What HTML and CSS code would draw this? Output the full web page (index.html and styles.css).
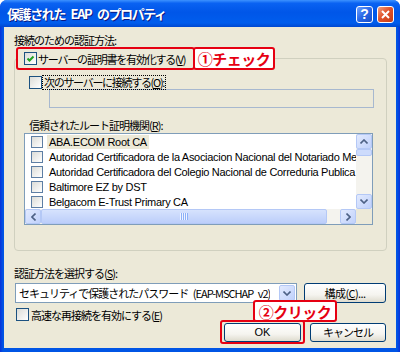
FILE: index.html
```html
<!DOCTYPE html>
<html lang="ja">
<head>
    <meta charset="UTF-8">
    <title>保護された EAP のプロパティ</title>
    <link rel="stylesheet" href="styles.css">
</head>
<body>
<div class="window">
    <div class="titlebar">
        <span class="title">保護された EAP のプロパティ</span>
        <div class="title-btns">
            <span class="tbtn help">?</span>
            <span class="tbtn close">
                <svg width="9" height="9" viewBox="0 0 9 9"><path d="M1 1 L8 8 M8 1 L1 8" stroke="#fff" stroke-width="2"/></svg>
            </span>
        </div>
    </div>

    <div class="dialog">
        <div class="label">接続のための認証方法:</div>

        <div class="group">
            <div class="group-head">
                <div class="mark">
                    <span class="cb"><svg width="9" height="9" viewBox="0 0 9 9"><polyline points="1.5,4.5 3.5,6.5 7.5,2.5" fill="none" stroke="#21a121" stroke-width="2"/></svg></span>
                    <span>サーバーの証明書を有効化する(<u>V</u>)</span>
                </div>
                <div class="callout">①チェック</div>
            </div>

            <div class="row server-row">
                <span class="cb"></span>
                <span class="focus">次のサーバーに接続する(<u>O</u>):</span>
            </div>
            <div class="textbox"></div>

            <div class="label sub-label">信頼されたルート証明機関(<u>R</u>):</div>
            <div class="listbox">
                <div class="list-main">
                    <div class="list-rows">
                        <div class="item"><span class="cb small"></span><span class="name selected">ABA.ECOM Root CA</span></div>
                        <div class="item"><span class="cb small"></span><span class="name">Autoridad Certificadora de la Asociacion Nacional del Notariado Mexicano</span></div>
                        <div class="item"><span class="cb small"></span><span class="name">Autoridad Certificadora del Colegio Nacional de Correduria Publica Mexicana</span></div>
                        <div class="item"><span class="cb small"></span><span class="name">Baltimore EZ by DST</span></div>
                        <div class="item"><span class="cb small"></span><span class="name">Belgacom E-Trust Primary CA</span></div>
                    </div>
                    <div class="vscroll">
                        <span class="sbtn"><svg width="8" height="5" viewBox="0 0 8 5"><polyline points="0.5,4.5 4,1 7.5,4.5" fill="none" stroke="#4d6185" stroke-width="1.6"/></svg></span>
                        <span class="vthumb"></span>
                        <span class="track"></span>
                        <span class="sbtn"><svg width="8" height="5" viewBox="0 0 8 5"><polyline points="0.5,0.5 4,4 7.5,0.5" fill="none" stroke="#4d6185" stroke-width="1.6"/></svg></span>
                    </div>
                </div>
                <div class="hscroll">
                    <span class="sbtn"><svg width="5" height="8" viewBox="0 0 5 8"><polyline points="4.5,0.5 1,4 4.5,7.5" fill="none" stroke="#4d6185" stroke-width="1.6"/></svg></span>
                    <span class="hthumb">
                        <svg width="8" height="7" viewBox="0 0 8 7"><path d="M0.5 0 V7 M2.5 0 V7 M4.5 0 V7 M6.5 0 V7" stroke="#eef3ff" stroke-width="1"/><path d="M1.5 0 V7 M3.5 0 V7 M5.5 0 V7 M7.5 0 V7" stroke="#8cb0f8" stroke-width="1"/></svg>
                    </span>
                    <span class="track"></span>
                    <span class="sbtn"><svg width="5" height="8" viewBox="0 0 5 8"><polyline points="0.5,0.5 4,4 0.5,7.5" fill="none" stroke="#4d6185" stroke-width="1.6"/></svg></span>
                    <span class="corner"></span>
                </div>
            </div>
        </div>

        <div class="label method-label">認証方法を選択する(<u>S</u>):</div>
        <div class="select-row">
            <div class="select">
                <span class="select-text">セキュリティで保護されたパスワード (EAP-MSCHAP v2)</span>
                <span class="drop"><svg width="8" height="5" viewBox="0 0 8 5"><polyline points="0.5,0.5 4,4 7.5,0.5" fill="none" stroke="#4d6185" stroke-width="1.6"/></svg></span>
            </div>
            <span class="btn config">構成(<u>C</u>)...</span>
        </div>

        <div class="row fast-row">
            <span class="cb"></span>
            <span>高速な再接続を有効にする(<u>E</u>)</span>
        </div>

        <div class="btn-row">
            <div class="ok-mark">
                <span class="btn ok">OK</span>
                <div class="callout click">②クリック</div>
            </div>
            <span class="btn cancel">キャンセル</span>
        </div>
    </div>
</div>
</body>
</html>
```

FILE: styles.css
```css
body {
    margin: 0;
    font-family: "Noto Sans CJK JP", sans-serif;
    font-size: 11px;
    letter-spacing: -1px;
    white-space: nowrap;
    color: #000;
    background: #fff;
}
.window {
    width: 400px;
    height: 352px;
    display: flex;
    flex-direction: column;
    background: linear-gradient(90deg, #0831d9, #0055e5 3px, #0055e5 397px, #0831d9);
    border-radius: 7px 7px 0 0;
}
.titlebar {
    height: 27px;
    flex: none;
    display: flex;
    align-items: center;
    justify-content: space-between;
    padding: 0 6px 0 7px;
    border-radius: 7px 7px 0 0;
    background: linear-gradient(180deg, #3d92ff 0%, #0a62f2 12%, #0056e8 45%, #005ded 85%, #0048d0 100%);
}
.title {
    color: #fff;
    font-size: 13px;
    font-weight: bold;
    letter-spacing: -1.4px;
    word-spacing: 4px;
    text-shadow: 1px 1px #0a1883;
}
.title-btns {
    display: flex;
    gap: 4px;
    margin-top: 1px;
}
.tbtn {
    width: 17px;
    height: 17px;
    box-sizing: border-box;
    border: 1px solid #fff;
    border-radius: 3px;
    display: flex;
    align-items: center;
    justify-content: center;
    color: #fff;
    font-family: "Liberation Sans", sans-serif;
    font-weight: bold;
    font-size: 14px;
    letter-spacing: 0;
}
.help {
    background: linear-gradient(135deg, #6fa2ff, #2866e6 50%, #1a4fc8);
}
.close {
    background: linear-gradient(135deg, #f2a080, #e0532c 45%, #c63c16);
}
.dialog {
    flex: 1;
    margin: 0 4px 4px;
    padding: 6px 6px 0 10px;
    background: #ece9d8;
}
.label {
    line-height: 14px;
    height: 14px;
}
.group {
    margin-top: 11px;
    width: 373px;
    height: 193px;
    box-sizing: border-box;
    border: 1px solid #d0d0bf;
    border-radius: 4px;
}
.group-head {
    display: flex;
    height: 23px;
    margin: -12px 0 0 1px;
}
.mark {
    width: 179px;
    box-sizing: border-box;
    border: 2px solid #e60012;
    border-radius: 3px;
    background: #ece9d8;
    display: flex;
    align-items: center;
    gap: 1px;
    padding-left: 6px;
    letter-spacing: -1.2px;
}
.callout {
    width: 82px;
    margin-left: -2px;
    box-sizing: border-box;
    border: 2px solid #e60012;
    border-radius: 3px;
    background: #fff;
    color: #e60012;
    font-size: 15px;
    font-weight: bold;
    letter-spacing: -0.5px;
    display: flex;
    align-items: center;
    justify-content: center;
    line-height: 1;
}
.cb {
    width: 13px;
    height: 13px;
    flex: none;
    box-sizing: border-box;
    border: 1px solid #1c5180;
    background: linear-gradient(135deg, #dcdcd7, #fff);
    display: flex;
    align-items: center;
    justify-content: center;
}
.cb.small {
    width: 12px;
    height: 12px;
    border-color: #5d7ea4;
}
.row {
    display: flex;
    align-items: center;
}
.server-row {
    margin-top: 6px;
    height: 13px;
    padding-left: 14px;
    gap: 1px;
    letter-spacing: -1.3px;
}
.focus {
    outline: 1px dotted #000;
    padding: 0 1px;
    line-height: 13px;
}
.textbox {
    margin-left: 34px;
    width: 325px;
    height: 19px;
    box-sizing: border-box;
    border: 1px solid #a7b8cf;
    background: #ece9d8;
}
.sub-label {
    margin-top: 10px;
    padding-left: 14px;
}
.listbox {
    margin: 1px 0 0 9px;
    width: 349px;
    height: 92px;
    box-sizing: border-box;
    border: 1px solid #7f9db9;
    background: #fff;
    display: flex;
    flex-direction: column;
}
.list-main {
    display: flex;
    height: 75px;
}
.list-rows {
    width: 331px;
    overflow: hidden;
}
.item {
    height: 15px;
    display: flex;
    align-items: center;
    padding-left: 6px;
    gap: 4px;
    font-family: "Liberation Sans", sans-serif;
    letter-spacing: -0.3px;
}
.name {
    padding: 0 2px;
    line-height: 14px;
}
.selected {
    background: #ece9d8;
}
.vscroll {
    width: 16px;
    display: flex;
    flex-direction: column;
    background: #f4f3ee;
}
.hscroll {
    height: 15px;
    display: flex;
    background: #f4f3ee;
}
.sbtn {
    flex: none;
    width: 16px;
    height: 15px;
    box-sizing: border-box;
    border: 1px solid #b4c8f6;
    border-radius: 2px;
    background: linear-gradient(135deg, #e2eafe, #c0d1fb);
    display: flex;
    align-items: center;
    justify-content: center;
}
.vthumb {
    height: 7px;
    box-sizing: border-box;
    border: 1px solid #b4c8f6;
    border-radius: 2px;
    background: #cddbfc;
}
.track {
    flex: 1;
}
.hthumb {
    width: 286px;
    box-sizing: border-box;
    border: 1px solid #b4c8f6;
    border-radius: 2px;
    background: linear-gradient(180deg, #d6e2fd, #bccefa);
    display: flex;
    align-items: center;
    justify-content: center;
}
.corner {
    width: 16px;
    background: #ece9d8;
}
.method-label {
    margin-top: 15px;
}
.select-row {
    margin-top: 3px;
    padding-left: 1px;
    display: flex;
    gap: 7px;
}
.select {
    width: 282px;
    height: 20px;
    box-sizing: border-box;
    border: 1px solid #7f9db9;
    background: #fff;
    display: flex;
    align-items: center;
    justify-content: space-between;
    padding: 1px;
}
.select-text {
    padding-left: 2px;
    overflow: hidden;
    word-spacing: 3px;
}
.drop {
    flex: none;
    width: 16px;
    height: 16px;
    box-sizing: border-box;
    border: 1px solid #b4c8f6;
    border-radius: 2px;
    background: linear-gradient(135deg, #e2eafe, #c0d1fb);
    display: flex;
    align-items: center;
    justify-content: center;
}
.btn {
    box-sizing: border-box;
    border: 1px solid #003c74;
    border-radius: 3px;
    background: linear-gradient(180deg, #fff 0%, #f5f4ef 60%, #dedbce 100%);
    display: flex;
    align-items: center;
    justify-content: center;
    height: 20px;
}
.config {
    width: 82px;
    letter-spacing: -0.6px;
}
.fast-row {
    margin-top: 6px;
    height: 11px;
    padding-left: 2px;
    gap: 2px;
}
.btn-row {
    display: flex;
    justify-content: flex-end;
    align-items: center;
    gap: 5px;
    padding-right: 4px;
}
.ok-mark {
    position: relative;
    width: 85px;
    height: 24px;
    box-sizing: border-box;
    border: 2px solid #e60012;
    border-radius: 3px;
    display: flex;
    align-items: center;
    justify-content: center;
}
.ok {
    width: 77px;
    height: 19px;
    font-family: "Liberation Sans", sans-serif;
    letter-spacing: 0;
}
.cancel {
    width: 76px;
    height: 19px;
}
.click {
    position: absolute;
    left: 31px;
    top: -22px;
    width: 84px;
    height: 22px;
    margin: 0;
}
```
